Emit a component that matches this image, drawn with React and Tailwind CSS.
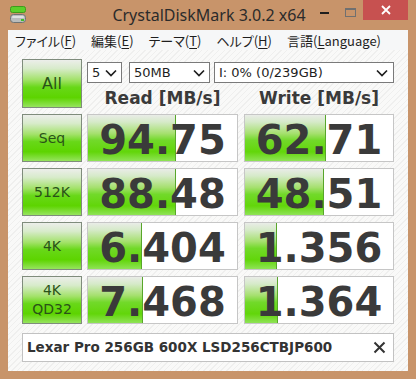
import React from "react";

const rows = [
  { label: ["Seq"], read: "94.75", rw: 88, write: "62.71", ww: 81 },
  { label: ["512K"], read: "88.48", rw: 88, write: "48.51", ww: 79 },
  { label: ["4K"], read: "6.404", rw: 54, write: "1.356", ww: 32 },
  { label: ["4K", "QD32"], read: "7.468", rw: 55, write: "1.364", ww: 33 },
];

function Chevron() {
  return (
    <svg width="12" height="8" viewBox="0 0 12 8">
      <path d="M1 1.5L6 6.5L11 1.5" fill="none" stroke="#1e1e1e" strokeWidth="1.7" />
    </svg>
  );
}

function GreenButton({ children, className = "" }) {
  return (
    <div
      className={
        "w-[60px] flex flex-col items-center justify-center border border-[#7f8c7c] bg-[linear-gradient(to_bottom,#eceeea_0%,#d8ebcb_18%,#a3e26a_42%,#68d818_58%,#5dd400_80%,#96e45e_100%)] font-['DejaVu_Sans',sans-serif] text-[#2a5218] " +
        className
      }
    >
      {children}
    </div>
  );
}

function ValueBox({ value, barW, w }) {
  return (
    <div className={"relative h-[48px] border border-[#c6c6c6] bg-white flex items-center justify-center " + w}>
      <div
        className="absolute left-0 top-0 bottom-0 border-r border-[#58a62a] bg-[linear-gradient(to_bottom,#e9ece7_0%,#d6eac9_15%,#a6e06f_40%,#72d92a_55%,#62d60a_80%,#8fe356_100%)]"
        style={{ width: barW }}
      />
      <span className="relative pt-[3px] font-['DejaVu_Sans',sans-serif] font-bold text-[40px] leading-none text-[#3a3a3a]">
        {value}
      </span>
    </div>
  );
}

function MenuItem({ pre, k }) {
  return (
    <span>
      {pre}(<span className="underline underline-offset-2">{k}</span>)
    </span>
  );
}

export default function App() {
  return (
    <div className="w-[416px] h-[379px] bg-[#c8946a] flex flex-col px-[8px] pb-[8px] overflow-hidden">
      {/* Title bar */}
      <div className="h-[30px] grid grid-cols-[1fr_auto_1fr] -mx-[8px] pl-[10px] pr-[8px]">
        <div className="flex items-start pt-[6px]">
          <svg width="16" height="17" viewBox="0 0 16 17">
            <rect x="0.5" y="0.5" width="15" height="6" rx="2" fill="#5ccf2a" stroke="#3f9a1c" />
            <rect x="0.5" y="8.5" width="15" height="8" rx="3" fill="#b9bcbc" stroke="#6f7373" />
            <rect x="2" y="10" width="12" height="2" rx="1" fill="#dfe1e1" />
            <rect x="11" y="13" width="3" height="2" fill="#3fbf2a" />
          </svg>
        </div>
        <div className="flex items-center pb-[1px] font-['Noto_Sans',sans-serif] text-[16px] text-[#2b2b2b] whitespace-nowrap">
          CrystalDiskMark 3.0.2 x64
        </div>
        <div className="flex justify-end items-start">
          <div className="w-[26px] h-[20px] flex items-center justify-center pt-[6px]">
            <div className="w-[9px] h-[2px] bg-[#1e1e1e]" />
          </div>
          <div className="w-[26px] h-[20px] flex items-start justify-center pt-[8px]">
            <div className="w-[11px] h-[9px] border border-[#707070] border-t-2" />
          </div>
          <div className="w-[45px] h-[20px] bg-[#c75150] flex items-center justify-center">
            <svg width="10" height="10" viewBox="0 0 10 10">
              <path d="M1 1L9 9M9 1L1 9" stroke="#fff" strokeWidth="1.8" />
            </svg>
          </div>
        </div>
      </div>

      {/* Client */}
      <div className="flex-1 flex flex-col bg-[repeating-linear-gradient(135deg,#f9f9f8_0px,#f9f9f8_3px,#efefee_3px,#efefee_4px)]">
        {/* Menu bar */}
        <div className="h-[20px] bg-[#f6f7f8] flex items-center gap-[15px] pl-[7px] font-['Noto_Sans_CJK_JP',sans-serif] [font-feature-settings:'palt'] text-[13px] text-[#1e1e1e] leading-none">
          <MenuItem pre="ファイル" k="F" />
          <MenuItem pre="編集" k="E" />
          <MenuItem pre="テーマ" k="T" />
          <MenuItem pre="ヘルプ" k="H" />
          <span>
            言語(<span className="underline underline-offset-2">L</span>anguage)
          </span>
        </div>

        {/* Content */}
        <div className="flex flex-col gap-[6px] pl-[14px] pt-[9px]">
          {/* Top row */}
          <div className="flex h-[49px]">
            <GreenButton className="h-[49px]">
              <span className="text-[16px] [color:#2a5218]">All</span>
            </GreenButton>
            <div className="ml-[5px] w-[307px] flex flex-col">
              <div className="mt-[3px] h-[21px] flex font-['DejaVu_Sans',sans-serif] text-[13px] text-[#1e1e1e]">
                <div className="w-[35px] border border-[#7a7a7a] bg-white flex items-center justify-between pl-[4px] pr-[4px]">
                  <span>5</span>
                  <Chevron />
                </div>
                <div className="ml-[7px] w-[81px] border border-[#7a7a7a] bg-white flex items-center justify-between pl-[4px] pr-[4px]">
                  <span>50MB</span>
                  <Chevron />
                </div>
                <div className="ml-[4px] w-[180px] border border-[#7a7a7a] bg-white flex items-center justify-between pl-[4px] pr-[5px]">
                  <span>I: 0% (0/239GB)</span>
                  <Chevron />
                </div>
              </div>
              <div className="mt-[5px] h-[20px] flex font-['DejaVu_Sans',sans-serif] font-bold text-[17px] leading-[20px] text-[#3a3a3a]">
                <div className="w-[151px] text-center">Read [MB/s]</div>
                <div className="ml-[6px] w-[150px] text-center">Write [MB/s]</div>
              </div>
            </div>
          </div>

          {rows.map((r) => (
            <div key={r.read} className="flex h-[48px]">
              <GreenButton className="h-[48px]">
                {r.label.map((l) => (
                  <span key={l} className="text-[14px] leading-[19px] [color:#2a5218]">
                    {l}
                  </span>
                ))}
              </GreenButton>
              <div className="ml-[5px]">
                <ValueBox value={r.read} barW={r.rw} w="w-[151px]" />
              </div>
              <div className="ml-[6px]">
                <ValueBox value={r.write} barW={r.ww} w="w-[150px]" />
              </div>
            </div>
          ))}

          {/* Comment */}
          <div className="mt-[3px] w-[372px] h-[29px] border border-[#c2c2c2] bg-white flex items-center justify-between pl-[4px] pr-[7px]">
            <span className="font-['DejaVu_Sans',sans-serif] font-bold text-[13.5px] text-[#333]">
              Lexar Pro 256GB 600X LSD256CTBJP600
            </span>
            <svg width="13" height="13" viewBox="0 0 13 13">
              <path d="M1.5 1.5L11.5 11.5M11.5 1.5L1.5 11.5" stroke="#333" strokeWidth="2" />
            </svg>
          </div>
        </div>
      </div>
    </div>
  );
}
